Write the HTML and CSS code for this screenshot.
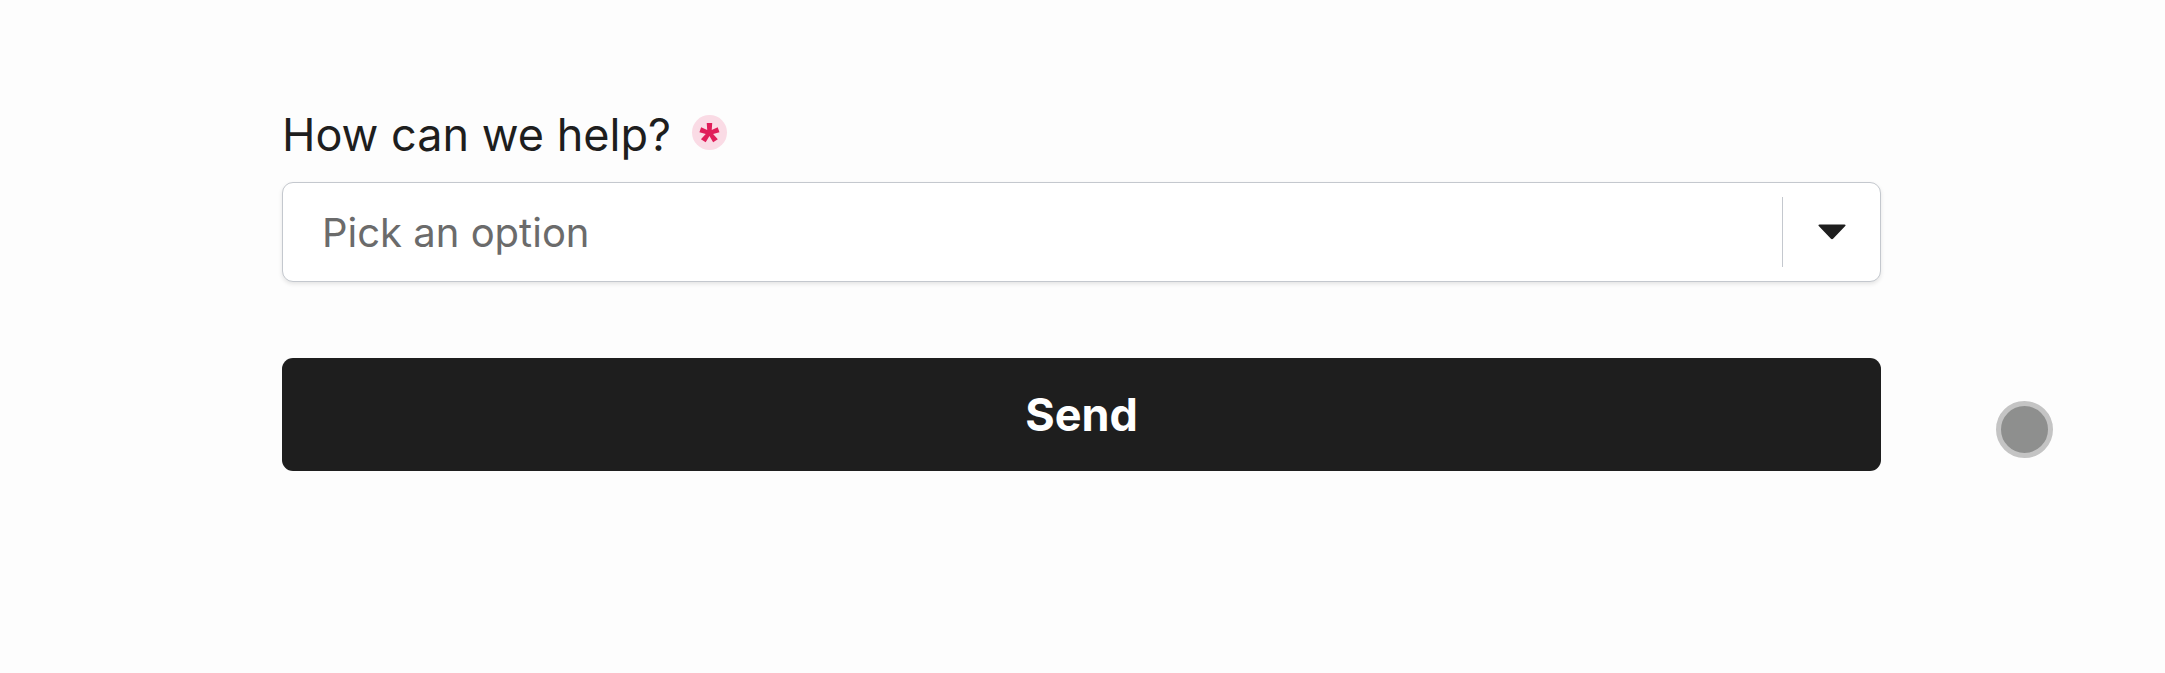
FILE: index.html
```html
<!DOCTYPE html>
<html lang="en">
<head>
<meta charset="utf-8">
<title>How can we help?</title>
<link rel="stylesheet" href="styles.css">
</head>
<body>
<main class="page">
  <form class="form">
    <div class="field">
      <div class="label-row">
        <label class="label" for="help">How can we help?</label>
        <span class="required"><span class="star">*</span></span>
      </div>
      <div class="select" id="help">
        <span class="placeholder">Pick an option</span>
        <span class="divider"></span>
        <span class="arrow">
          <svg width="30" height="18" viewBox="0 0 30 18"><path d="M2.5 1.5 H27.5 Q29.5 1.5 28 3.2 L16.3 15.6 Q15 17 13.7 15.6 L2 3.2 Q0.5 1.5 2.5 1.5 Z" fill="#1e1e1e"/></svg>
        </span>
      </div>
    </div>
    <button type="button" class="send">Send</button>
  </form>
  <span class="dot"></span>
</main>
</body>
</html>
```
FILE: styles.css
```css
html, body {
  margin: 0;
  padding: 0;
  background: #fdfdfd;
}
body {
  font-family: Inter, "Noto Sans", "Liberation Sans", sans-serif;
  color: #1e1e1e;
}
.page {
  position: relative;
  height: 673px;
  padding: 108px 0 0 282px;
  box-sizing: border-box;
}
.form {
  width: 1599px;
  display: flex;
  flex-direction: column;
}
.label-row {
  display: flex;
  align-items: center;
  gap: 21px;
  height: 54px;
}
.label {
  font-size: 45px;
  line-height: 54px;
  color: #1e1e1e;
}
.required {
  width: 35px;
  height: 35px;
  margin-bottom: 6px;
  border-radius: 50%;
  background: #fadbe5;
  display: flex;
  justify-content: center;
  align-items: flex-start;
  overflow: visible;
}
.star {
  display: block;
  margin-top: 0;
  color: #e01e5a;
  font-family: "Liberation Sans", Arial, sans-serif;
  font-size: 52px;
  font-weight: 700;
  line-height: 1;
  height: 35px;
}
.select {
  margin-top: 20px;
  height: 100px;
  box-sizing: border-box;
  border: 1.5px solid #c4c8ce;
  border-radius: 11px;
  background: #fff;
  box-shadow: 0 2px 4px rgba(0, 0, 0, 0.1);
  display: flex;
  align-items: center;
}
.placeholder {
  flex: 1;
  padding-left: 39px;
  font-size: 40px;
  color: #6b6b6b;
}
.divider {
  width: 1.5px;
  align-self: stretch;
  margin: 14px 0;
  background: #c4c8ce;
}
.arrow {
  width: 97px;
  display: flex;
  justify-content: center;
  align-items: center;
}
.arrow svg {
  display: block;
}
.send {
  margin-top: 76px;
  height: 113px;
  border: none;
  border-radius: 11px;
  background: #1e1e1e;
  color: #fff;
  font-family: Inter, "Noto Sans", "Liberation Sans", sans-serif;
  font-size: 45px;
  font-weight: 700;
  padding: 0;
}
.dot {
  position: absolute;
  left: 1996px;
  top: 401px;
  width: 57px;
  height: 57px;
  box-sizing: border-box;
  border-radius: 50%;
  background: #8e8f8e;
  border: 5px solid #c4c4c4;
}
```
